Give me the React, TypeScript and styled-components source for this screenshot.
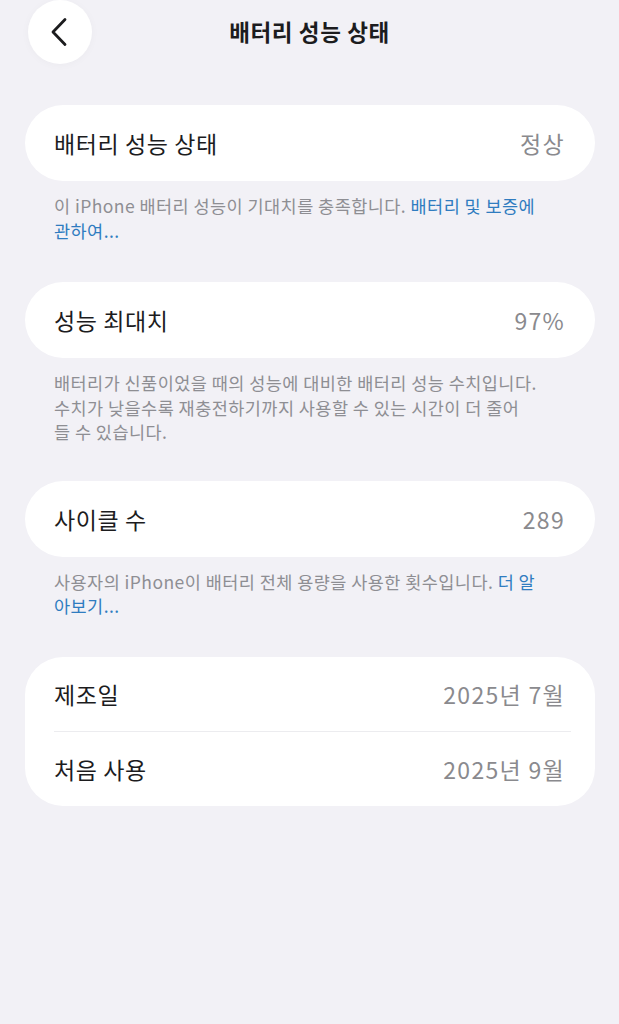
import React from 'react';
import styled, { createGlobalStyle } from 'styled-components';

const GlobalStyle = createGlobalStyle`
  html, body {
    margin: 0;
    padding: 0;
    background: #f2f1f6;
  }
  body {
    font-family: "Noto Sans CJK KR", "Noto Sans", sans-serif;
    -webkit-font-smoothing: antialiased;
  }
`;

const Page = styled.div`
  min-height: 1024px;
  background: #f2f1f6;
  display: flex;
  flex-direction: column;
`;

const Header = styled.header`
  position: relative;
  height: 64px;
  display: flex;
  align-items: center;
  justify-content: center;
`;

const BackButton = styled.button`
  position: absolute;
  left: 28px;
  top: 0;
  width: 64px;
  height: 64px;
  border-radius: 50%;
  border: none;
  background: #ffffff;
  box-shadow: 0 1px 8px rgba(0, 0, 0, 0.03);
  display: flex;
  align-items: center;
  justify-content: center;
  padding: 0 2px 0 0;
`;

const Title = styled.h1`
  margin: 0 0 3px;
  font-size: 22.5px;
  font-weight: 700;
  color: #1c1c1e;
  letter-spacing: 0.6px;
`;

const Content = styled.main`
  padding: 41px 24px 0 25px;
  display: flex;
  flex-direction: column;
`;

const Card = styled.div`
  background: #ffffff;
  border-radius: 38px;
  display: flex;
  flex-direction: column;
`;

const Row = styled.div<{ $h?: number }>`
  height: ${(p) => p.$h ?? 76}px;
  display: flex;
  align-items: center;
  justify-content: space-between;
  padding: 0 31px 0 29px;
`;

const Divider = styled.div`
  height: 1px;
  background: #ececef;
  margin: 0 24px 0 29px;
`;

const Label = styled.span`
  font-size: 23px;
  color: #1c1c1e;
  letter-spacing: 0.6px;
`;

const Value = styled.span`
  font-size: 23px;
  color: #8a8a8e;
  letter-spacing: 1.3px;
  margin-right: -1px;
`;

const Footnote = styled.p<{ $gap: number }>`
  margin: 0 0 ${(p) => p.$gap}px;
  padding: 13px 8px 0 29px;
  font-size: 17.5px;
  line-height: 24.5px;
  letter-spacing: 0.45px;
  color: #8e8e93;
`;

const Link = styled.a`
  color: #2f7cc0;
  text-decoration: none;
`;

const Chevron = () => (
  <svg width="18" height="30" viewBox="0 0 18 30" fill="none">
    <path
      d="M15 2.5 L3 15 L15 27.5"
      stroke="#1c1c1e"
      strokeWidth="2.8"
      strokeLinecap="round"
      strokeLinejoin="round"
    />
  </svg>
);

export default function App() {
  return (
    <Page>
      <GlobalStyle />
      <Header>
        <BackButton aria-label="뒤로">
          <Chevron />
        </BackButton>
        <Title>배터리 성능 상태</Title>
      </Header>
      <Content>
        <Card>
          <Row>
            <Label>배터리 성능 상태</Label>
            <Value>정상</Value>
          </Row>
        </Card>
        <Footnote $gap={39}>
          이 iPhone 배터리 성능이 기대치를 충족합니다. <Link>배터리 및 보증에</Link>
          <br />
          <Link>관하여...</Link>
        </Footnote>

        <Card>
          <Row>
            <Label>성능 최대치</Label>
            <Value>97%</Value>
          </Row>
        </Card>
        <Footnote $gap={36}>
          배터리가 신품이었을 때의 성능에 대비한 배터리 성능 수치입니다.
          <br />
          수치가 낮을수록 재충전하기까지 사용할 수 있는 시간이 더 줄어
          <br />
          들 수 있습니다.
        </Footnote>

        <Card>
          <Row>
            <Label>사이클 수</Label>
            <Value>289</Value>
          </Row>
        </Card>
        <Footnote $gap={38}>
          사용자의 iPhone이 배터리 전체 용량을 사용한 횟수입니다. <Link>더 알</Link>
          <br />
          <Link>아보기...</Link>
        </Footnote>

        <Card>
          <Row $h={74}>
            <Label>제조일</Label>
            <Value>2025년 7월</Value>
          </Row>
          <Divider />
          <Row $h={74}>
            <Label>처음 사용</Label>
            <Value>2025년 9월</Value>
          </Row>
        </Card>
      </Content>
    </Page>
  );
}
